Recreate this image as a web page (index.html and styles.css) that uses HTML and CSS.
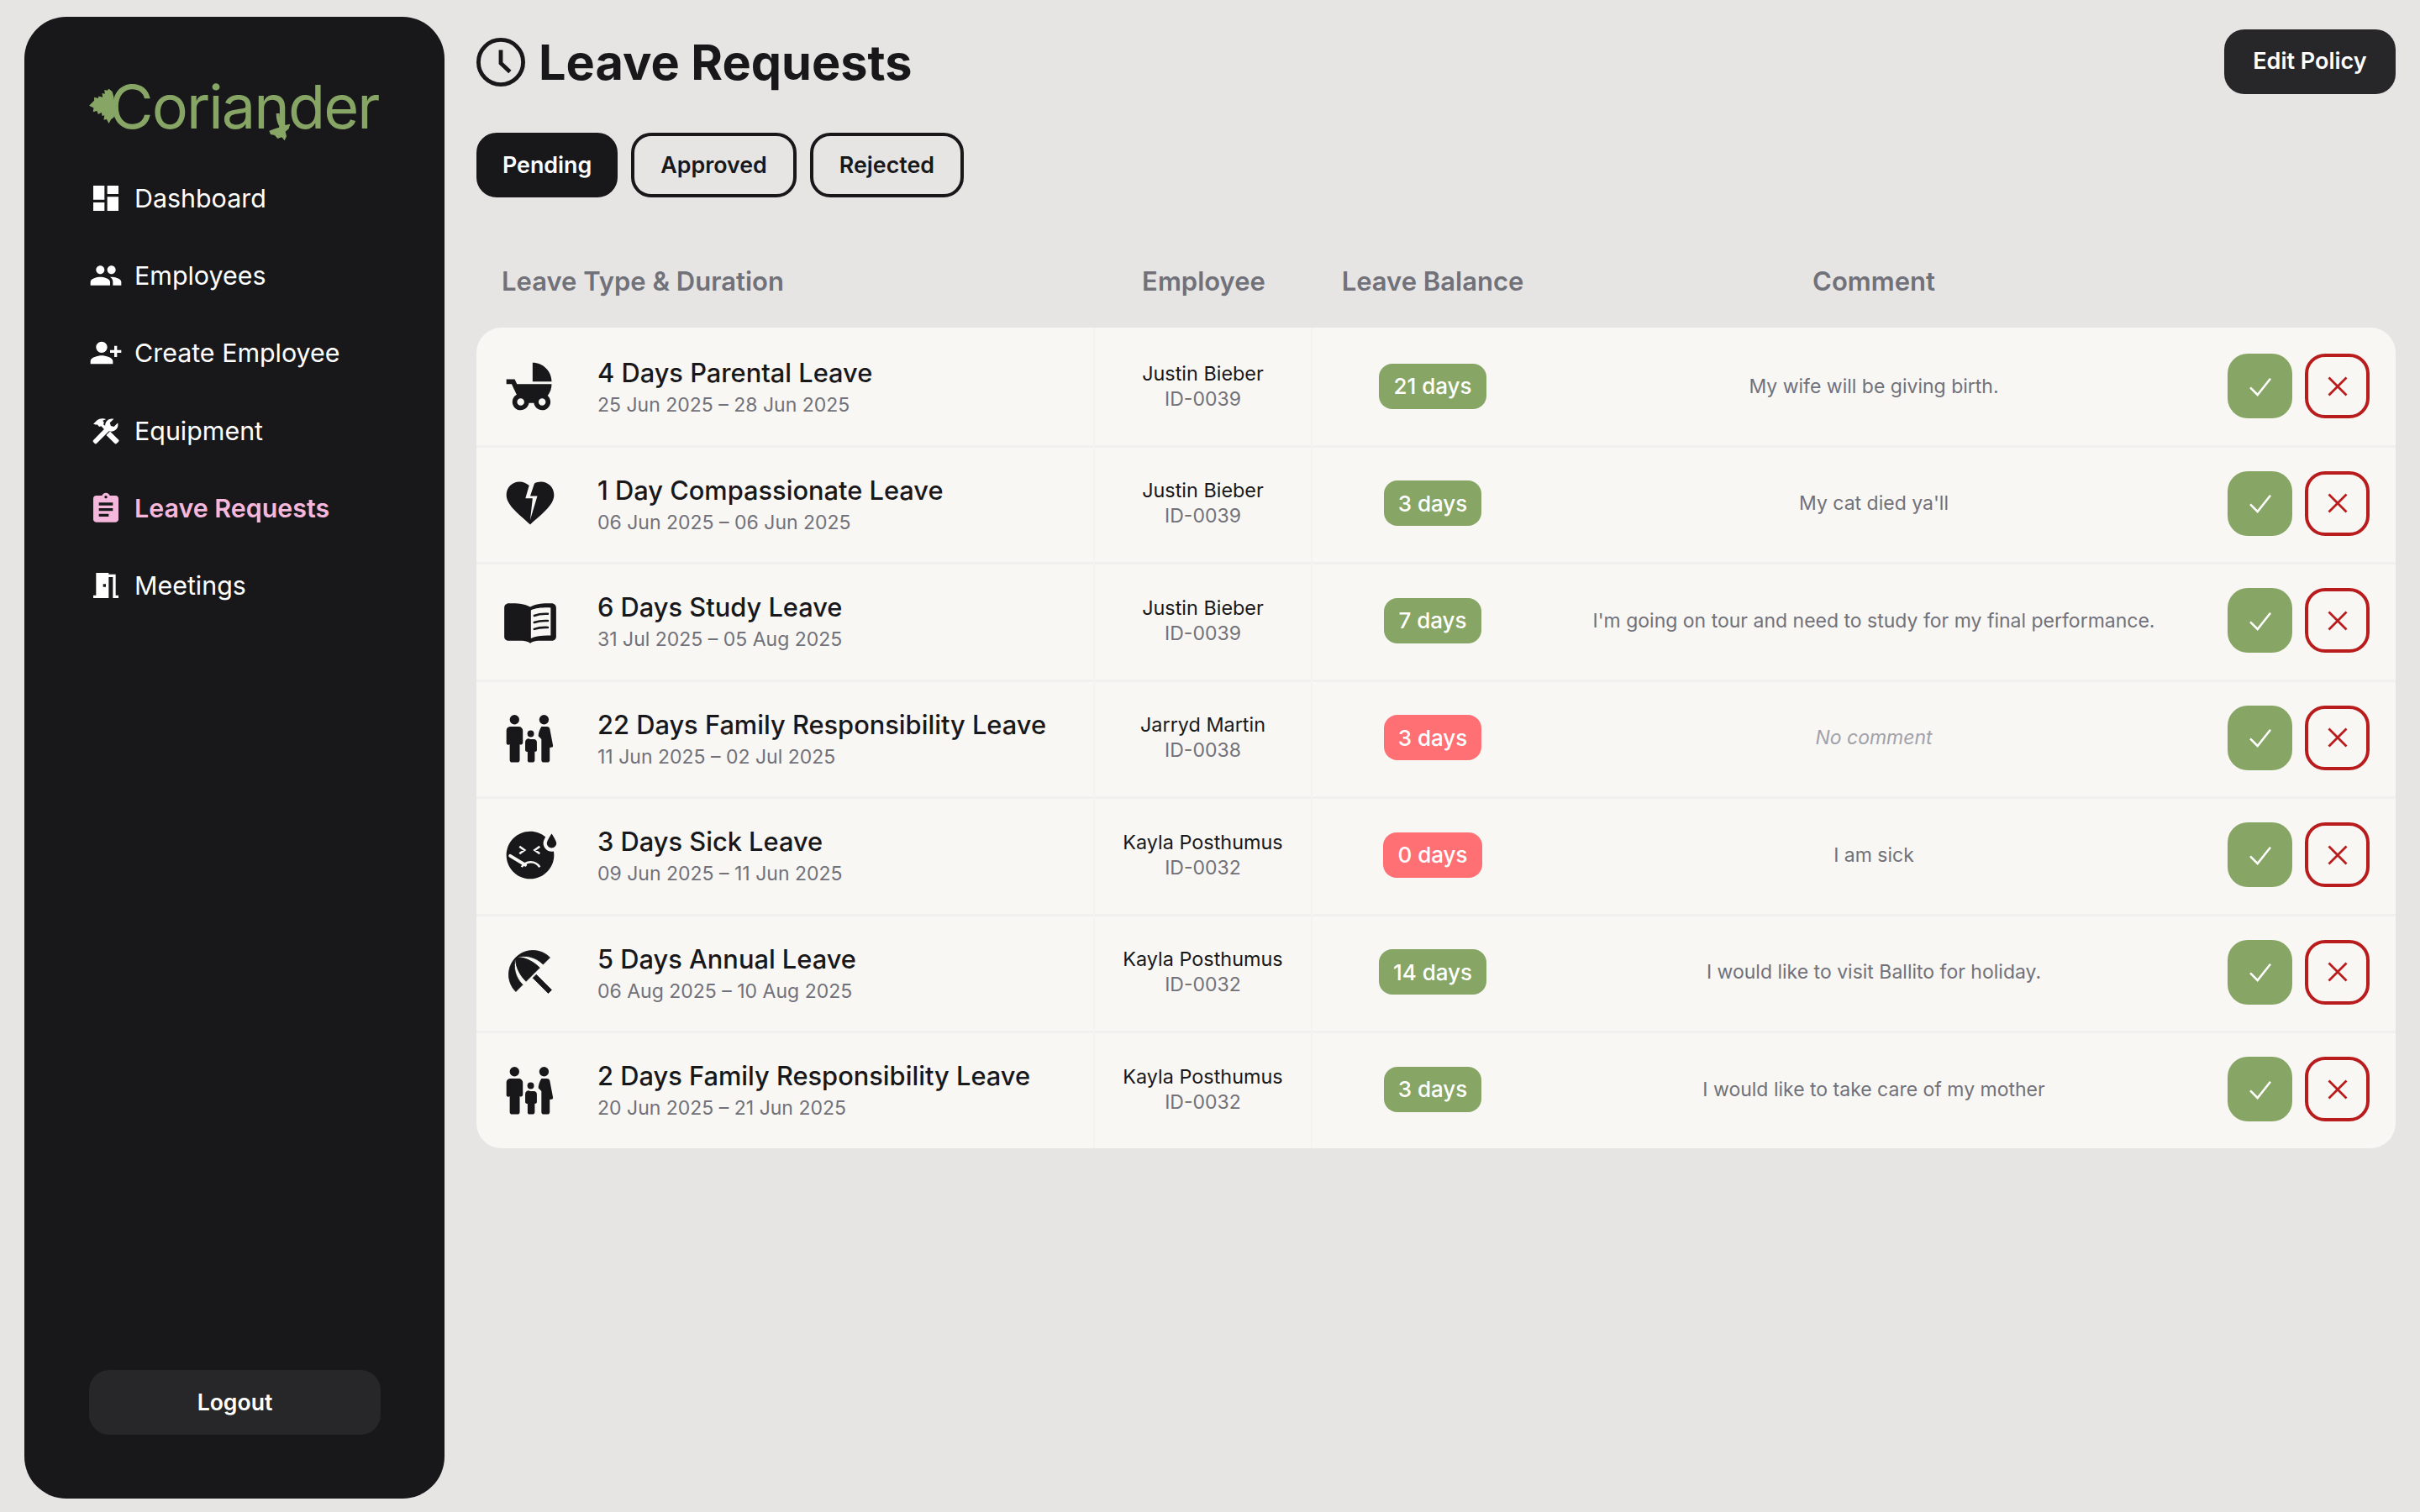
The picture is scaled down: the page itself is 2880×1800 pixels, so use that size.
FILE: index.html
```html
<!DOCTYPE html>
<html lang="en">
<head>
<meta charset="utf-8">
<title>Leave Requests</title>
<link rel="stylesheet" href="styles.css">
</head>
<body>
<svg class="defs" width="0" height="0" aria-hidden="true">
  <defs>
    <symbol id="i-family" viewBox="0 0 24 24">
      <circle cx="5.4" cy="4.5" r="2"/>
      <circle cx="17.8" cy="4.5" r="2"/>
      <circle cx="12.2" cy="10.4" r="1.4"/>
      <path d="M3.500 7.400h3.700a1.700 1.700 0 0 1 1.700 1.700v5.100a.8.8 0 0 1-1.300.6v6.600a1 1 0 0 1-1 1H4.400a1 1 0 0 1-1-1v-6.600a.8.8 0 0 1-1.400-.6V9.100a1.600 1.600 0 0 1 1.500-1.700z"/>
      <path d="M11 12.700h2.500a1.400 1.400 0 0 1 1.300 1.400v3.100a.7.7 0 0 1-.9.7v3.500a1 1 0 0 1-1 1h-1.100a.9.9 0 0 1-.9-1v-3.500a.7.7 0 0 1-1-.7v-3.100a1.400 1.400 0 0 1 2.100-1.400z"/>
      <path d="M16.700 7.400h2.300c.6 0 1 .3 1.200.8l1.300 6.800a1 1 0 0 1-.2 1.100l-1.100.1v5.200a1 1 0 0 1-1 1h-1.500a1 1 0 0 1-1-1v-8.700l-1.300-1.300c.1-1.400.5-2.800 1.300-4z"/>
    </symbol>
    <symbol id="i-check" viewBox="0 0 24 24"><path d="M3 13l6.500 6.500L21 5" fill="none" stroke="currentColor" stroke-width="1.9"/></symbol>
    <symbol id="i-cross" viewBox="0 0 24 24"><path d="M3 3l18 18M21 3L3 21" fill="none" stroke="currentColor" stroke-width="2.4"/></symbol>
  </defs>
</svg>
<div class="app">
  <aside class="sidebar">
    <div class="logo">
      <svg class="leaf-a" viewBox="18 60 92 128" aria-hidden="true"><path d="M105 90L100 72 88 62 82 68 72 66 74 80 64 78 66 92 52 88 50 96 36 92 36 104 18 122 34 130 32 144 46 140 50 152 62 146 64 158 72 156 70 172 80 170 88 185 96 170 104 165 110 155z"/></svg>
      <span class="logo-text">Coriander</span>
      <svg class="leaf-b" viewBox="650 150 90 105" aria-hidden="true"><path class="leaf-stem" d="M691 150C691 175 695 185 703 195"/><path d="M735 188L715 192 700 188 695 200 680 205 660 212 665 225 680 228 690 240 705 235 715 247 722 232 718 215 730 205z"/></svg>
    </div>
    <nav class="nav">
      <a class="nav-item"><svg class="nav-icon" viewBox="0 0 24 24"><path d="M3 13h8V3H3v10zm0 8h8v-6H3v6zm10 0h8V11h-8v10zm0-18v6h8V3h-8z"/></svg><span>Dashboard</span></a>
      <a class="nav-item"><svg class="nav-icon" viewBox="0 0 24 24"><path d="M16 11c1.66 0 2.99-1.34 2.99-3S17.66 5 16 5c-1.66 0-3 1.34-3 3s1.34 3 3 3zm-8 0c1.66 0 2.99-1.34 2.99-3S9.66 5 8 5C6.34 5 5 6.34 5 8s1.34 3 3 3zm0 2c-2.33 0-7 1.17-7 3.5V19h14v-2.5c0-2.33-4.67-3.5-7-3.5zm8 0c-.29 0-.62.02-.97.05 1.16.84 1.97 1.97 1.97 3.45V19h6v-2.5c0-2.33-4.67-3.5-7-3.5z"/></svg><span>Employees</span></a>
      <a class="nav-item"><svg class="nav-icon" viewBox="0 0 24 24"><path d="M9 12c2.21 0 4-1.79 4-4s-1.79-4-4-4-4 1.79-4 4 1.79 4 4 4zm9-2V7h2v3h3v2h-3v3h-2v-3h-3v-2h3zm-9 4c-2.67 0-8 1.34-8 4v2h16v-2c0-2.66-5.33-4-8-4z"/></svg><span>Create Employee</span></a>
      <a class="nav-item"><svg class="nav-icon" viewBox="-1 -1 26 26"><path d="M13.6 9.6l-2 2-3.3-3.300-1.400.4-1.700-1.700c-.5.2-1.200.4-1.600 0L2.300 6.700l2.900-3c1.300-1 3-1.500 4.700-1.300l2.300.5-2.600 1.200 1 1.600-.6 1.300z"/><path d="M21.800 20.300l-1.500 1.500c-.4.4-1 .4-1.400 0l-6.600-6.600 2.900-2.900 6.600 6.600c.4.4.4 1 0 1.400z"/><path d="M2.300 19.200c-.4.4-.4 1 0 1.400l1.100 1.200c.4.4 1 .4 1.400 0l9.600-9.600c1.900.6 4 .2 5.500-1.300 1.400-1.400 1.800-3.400 1.300-5.100l-3 3-2.400-.7-.7-2.400 3-3c-1.700-.5-3.700-.1-5.100 1.300-1.500 1.500-1.900 3.600-1.300 5.500z"/></svg><span>Equipment</span></a>
      <a class="nav-item is-active"><svg class="nav-icon" viewBox="0 0 24 24"><path fill-rule="evenodd" d="M19 3h-4.180C14.400 1.840 13.300 1 12 1c-1.300 0-2.400.84-2.820 2H5c-1.100 0-2 .9-2 2v15c0 1.100.9 2 2 2h14c1.100 0 2-.9 2-2V5c0-1.100-.9-2-2-2zm-7 0c.55 0 1 .45 1 1s-.45 1-1 1-1-.45-1-1 .45-1 1-1zM7 8v2h10V8H7zm0 4v2h10v-2H7zm0 4v2h7v-2H7z"/></svg><span>Leave Requests</span></a>
      <a class="nav-item"><svg class="nav-icon" viewBox="0 0 24 24"><path d="M14 6v15H3v-2h2V3h9v1h5v15h2v2h-4V6h-3zm-4 5v2h2v-2h-2z"/></svg><span>Meetings</span></a>
    </nav>
    <button class="logout">Logout</button>
  </aside>

  <main class="main">
    <header class="page-head">
      <h1 class="title">
        <svg class="title-icon" viewBox="0 0 24 24" aria-hidden="true"><circle cx="12" cy="12" r="11"/><path d="M12 6v6.500l4.500 4.300"/></svg>
        Leave Requests
      </h1>
      <button class="edit-policy">Edit Policy</button>
    </header>

    <div class="tabs">
      <button class="tab is-on">Pending</button>
      <button class="tab">Approved</button>
      <button class="tab">Rejected</button>
    </div>

    <div class="cols cols-head">
      <div class="head-first">Leave Type &amp; Duration</div>
      <div>Employee</div>
      <div>Leave Balance</div>
      <div>Comment</div>
      <div></div>
    </div>

    <section class="table">
      <article class="cols row">
        <div class="cell-type">
          <svg class="type-icon" viewBox="0 0 24 24"><path fill-rule="evenodd" d="M13 2v8h8c0-4.420-3.580-8-8-8zm6.320 13.890C20.370 14.540 21 12.840 21 11H6.440l-.95-2H2v2h2.220s1.890 4.070 2.120 4.420c-1.100.59-1.840 1.750-1.840 3.080C4.500 20.430 6.070 22 8 22c1.760 0 3.220-1.300 3.460-3h2.080c.24 1.700 1.700 3 3.460 3 1.930 0 3.500-1.570 3.500-3.500 0-1.040-.46-1.970-1.180-2.610zM8 20c-.83 0-1.500-.67-1.500-1.500S7.170 17 8 17s1.500.67 1.500 1.500S8.830 20 8 20zm9 0c-.83 0-1.500-.67-1.500-1.500S16.170 17 17 17s1.500.67 1.500 1.500S17.830 20 17 20z"/></svg>
          <div class="type-text"><div class="type-name">4 Days Parental Leave</div><div class="type-date">25 Jun 2025 – 28 Jun 2025</div></div>
        </div>
        <div class="cell-emp"><div class="emp-name">Justin Bieber</div><div class="emp-id">ID-0039</div></div>
        <div class="cell-bal"><span class="badge">21 days</span></div>
        <div class="cell-com">My wife will be giving birth.</div>
        <div class="cell-act"><button class="act act-ok"><svg viewBox="0 0 24 24"><use href="#i-check"/></svg></button><button class="act act-no"><svg viewBox="0 0 24 24"><use href="#i-cross"/></svg></button></div>
      </article>

      <article class="cols row">
        <div class="cell-type">
          <svg class="type-icon" viewBox="0 0 24 24"><path d="M16.500 3c-.96 0-1.900.25-2.730.69L12 9h3l-3 10 1-9h-3l1.540-5.390C10.470 3.610 9.010 3 7.500 3 4.420 3 2 5.420 2 8.500c0 4.130 4.160 7.180 10 12.500 5.470-4.940 10-8.260 10-12.500C22 5.420 19.580 3 16.500 3z"/></svg>
          <div class="type-text"><div class="type-name">1 Day Compassionate Leave</div><div class="type-date">06 Jun 2025 – 06 Jun 2025</div></div>
        </div>
        <div class="cell-emp"><div class="emp-name">Justin Bieber</div><div class="emp-id">ID-0039</div></div>
        <div class="cell-bal"><span class="badge">3 days</span></div>
        <div class="cell-com">My cat died ya'll</div>
        <div class="cell-act"><button class="act act-ok"><svg viewBox="0 0 24 24"><use href="#i-check"/></svg></button><button class="act act-no"><svg viewBox="0 0 24 24"><use href="#i-cross"/></svg></button></div>
      </article>

      <article class="cols row">
        <div class="cell-type">
          <svg class="type-icon" viewBox="0 0 24 24"><path fill-rule="evenodd" d="M3 4.700c3-.2 6.500 0 9 1.500 2.500-1.500 6-1.700 9-1.500 1.100 0 1.900.8 1.900 1.900v12.100c0 1-.8 1.700-1.900 1.700h-5.500c-1.200 0-2.400.3-3.500 1-1.100-.7-2.300-1-3.500-1H3c-1.100 0-1.900-.7-1.900-1.700V6.600c0-1.100.8-1.900 1.900-1.900zM12.300 7.600v11.800c2.200-1 5-1.300 8.300-1.200V6.500c-3.200-.1-6.300.1-8.300 1.100z"/><path class="book-lines" d="M13.700 9.900c1.700-.7 3.700-.9 5.700-.8M13.700 12.700c1.700-.6 3.700-.8 5.700-.7M13.700 15.500c1.700-.6 3.700-.8 5.700-.7"/></svg>
          <div class="type-text"><div class="type-name">6 Days Study Leave</div><div class="type-date">31 Jul 2025 – 05 Aug 2025</div></div>
        </div>
        <div class="cell-emp"><div class="emp-name">Justin Bieber</div><div class="emp-id">ID-0039</div></div>
        <div class="cell-bal"><span class="badge">7 days</span></div>
        <div class="cell-com">I'm going on tour and need to study for my final performance.</div>
        <div class="cell-act"><button class="act act-ok"><svg viewBox="0 0 24 24"><use href="#i-check"/></svg></button><button class="act act-no"><svg viewBox="0 0 24 24"><use href="#i-cross"/></svg></button></div>
      </article>

      <article class="cols row">
        <div class="cell-type">
          <svg class="type-icon" viewBox="0 0 24 24"><use href="#i-family"/></svg>
          <div class="type-text"><div class="type-name">22 Days Family Responsibility Leave</div><div class="type-date">11 Jun 2025 – 02 Jul 2025</div></div>
        </div>
        <div class="cell-emp"><div class="emp-name">Jarryd Martin</div><div class="emp-id">ID-0038</div></div>
        <div class="cell-bal"><span class="badge badge-low">3 days</span></div>
        <div class="cell-com is-empty">No comment</div>
        <div class="cell-act"><button class="act act-ok"><svg viewBox="0 0 24 24"><use href="#i-check"/></svg></button><button class="act act-no"><svg viewBox="0 0 24 24"><use href="#i-cross"/></svg></button></div>
      </article>

      <article class="cols row">
        <div class="cell-type">
          <svg class="type-icon" viewBox="0 0 24 24"><path d="M21 9c1.100 0 2-.9 2-2s-2-4-2-4-2 2.900-2 4 .9 2 2 2zM17.500 7c0-.73.41-1.710.92-2.660C16.680 2.880 14.440 2 11.990 2 6.470 2 2 6.480 2 12s4.470 10 9.990 10C17.520 22 22 17.520 22 12c0-.55-.06-1.090-.14-1.620-.28.07-.56.12-.86.12-1.930 0-3.500-1.570-3.500-3.500z"/><path class="sick-face" d="M7.500 8.400l2.100 1.500-2.100 1.500M16 8.400l-2.100 1.500 2.100 1.500M8.400 17c1.800-2.700 5.600-2.900 7.600 0"/><path class="sick-therm" d="M3.600 12.300l6.300 3.800"/></svg>
          <div class="type-text"><div class="type-name">3 Days Sick Leave</div><div class="type-date">09 Jun 2025 – 11 Jun 2025</div></div>
        </div>
        <div class="cell-emp"><div class="emp-name">Kayla Posthumus</div><div class="emp-id">ID-0032</div></div>
        <div class="cell-bal"><span class="badge badge-low">0 days</span></div>
        <div class="cell-com">I am sick</div>
        <div class="cell-act"><button class="act act-ok"><svg viewBox="0 0 24 24"><use href="#i-check"/></svg></button><button class="act act-no"><svg viewBox="0 0 24 24"><use href="#i-cross"/></svg></button></div>
      </article>

      <article class="cols row">
        <div class="cell-type">
          <svg class="type-icon" viewBox="0 0 24 24"><path class="soft" d="M13.127 14.560l1.430-1.430 6.440 6.443L19.570 21zM17.420 8.830l2.860-2.860c-3.950-3.950-10.350-3.960-14.300-.02 3.930-1.300 8.310-.25 11.440 2.880zM5.950 5.980c-3.940 3.950-3.930 10.350.02 14.300l2.860-2.860C5.700 14.290 4.650 9.910 5.950 5.980zM5.970 5.960l-.01.01c-.38 3.010 1.170 6.880 4.300 10.020l5.730-5.730c-3.130-3.130-7.010-4.680-10.020-4.300z"/></svg>
          <div class="type-text"><div class="type-name">5 Days Annual Leave</div><div class="type-date">06 Aug 2025 – 10 Aug 2025</div></div>
        </div>
        <div class="cell-emp"><div class="emp-name">Kayla Posthumus</div><div class="emp-id">ID-0032</div></div>
        <div class="cell-bal"><span class="badge">14 days</span></div>
        <div class="cell-com">I would like to visit Ballito for holiday.</div>
        <div class="cell-act"><button class="act act-ok"><svg viewBox="0 0 24 24"><use href="#i-check"/></svg></button><button class="act act-no"><svg viewBox="0 0 24 24"><use href="#i-cross"/></svg></button></div>
      </article>

      <article class="cols row">
        <div class="cell-type">
          <svg class="type-icon" viewBox="0 0 24 24"><use href="#i-family"/></svg>
          <div class="type-text"><div class="type-name">2 Days Family Responsibility Leave</div><div class="type-date">20 Jun 2025 – 21 Jun 2025</div></div>
        </div>
        <div class="cell-emp"><div class="emp-name">Kayla Posthumus</div><div class="emp-id">ID-0032</div></div>
        <div class="cell-bal"><span class="badge">3 days</span></div>
        <div class="cell-com">I would like to take care of my mother</div>
        <div class="cell-act"><button class="act act-ok"><svg viewBox="0 0 24 24"><use href="#i-check"/></svg></button><button class="act act-no"><svg viewBox="0 0 24 24"><use href="#i-cross"/></svg></button></div>
      </article>
    </section>
  </main>
</div>
</body>
</html>
```
FILE: styles.css
```css
* { box-sizing: border-box; }
html, body { margin: 0; height: 100%; }
body {
  background: #e6e5e3;
  color: #18181b;
  font-family: Inter, "Liberation Sans", sans-serif;
  overflow: hidden;
}
button { font-family: inherit; cursor: pointer; }
.defs { position: absolute; }

.app {
  display: flex;
  height: 1800px;
  padding: 20px 29px 16px 29px;
  gap: 38px;
}

/* Sidebar */
.sidebar {
  width: 500px;
  flex: none;
  background: #18181b;
  border-radius: 50px;
  display: flex;
  flex-direction: column;
  padding: 70px 76px 76px 77px;
}
.logo {
  position: relative;
  height: 70px;
  margin-bottom: 56px;
  color: #87a564;
  padding: 3px 0 0 24px;
  display: flex;
  align-items: center;
}
.logo-text {
  font-size: 72px;
  font-weight: 400;
  letter-spacing: -1.9px;
  line-height: 70px;
}
.leaf-a { position: absolute; left: 0; top: 15px; width: 31px; height: 43px; fill: #87a564; }
.leaf-b { position: absolute; left: 211px; top: 45px; width: 30px; height: 35px; fill: #87a564; }
.leaf-stem { fill: none; stroke: #87a564; stroke-width: 12; }
.nav { display: flex; flex-direction: column; gap: 52.2px; }
.nav-item {
  display: flex;
  align-items: center;
  height: 40px;
  gap: 14px;
  color: #fff;
  font-size: 30.4px;
  font-weight: 400;
  white-space: nowrap;
}
.nav-icon { width: 40px; height: 40px; flex: none; fill: currentColor; }
.nav-item.is-active { color: #f5b8dc; font-weight: 600; }
.logout {
  margin-top: auto;
  height: 77px;
  padding: 0 0 2px;
  border: 0;
  border-radius: 24px;
  background: #27272a;
  color: #fff;
  font-size: 26.6px;
  font-weight: 600;
}

/* Main */
.main { flex: 1; min-width: 0; padding-top: 15px; }
.page-head { display: flex; justify-content: space-between; align-items: center; height: 77px; }
.title {
  margin: 0;
  display: flex;
  align-items: center;
  gap: 16px;
  font-size: 57.6px;
  font-weight: 700;
  color: #18181b;
}
.title-icon { width: 58px; height: 58px; fill: none; stroke: #18181b; stroke-width: 2; }
.edit-policy {
  width: 204px;
  height: 77px;
  padding: 0 0 2px;
  border: 0;
  border-radius: 24px;
  background: #27272a;
  color: #fff;
  font-size: 27px;
  font-weight: 600;
}
.tabs { display: flex; gap: 16px; margin-top: 46px; }
.tab {
  height: 77px;
  padding: 0 31px 2px;
  border: 4px solid #18181b;
  border-radius: 24px;
  background: transparent;
  color: #18181b;
  font-size: 26.8px;
  font-weight: 600;
}
.tab.is-on { background: #18181b; color: #fff; padding: 0 27px 2px; }

/* Table */
.cols {
  display: grid;
  grid-template-columns: 736px 259px 286px 764px 239px;
}
.cols-head {
  margin-top: 64px;
  height: 70px;
  margin-bottom: 21px;
  align-items: center;
  text-align: center;
  color: #71717a;
  font-size: 31px;
  font-weight: 600;
}
.head-first { text-align: left; padding-left: 30px; }
.table {
  background: #f8f7f4;
  border-radius: 30px;
  overflow: hidden;
}
.row { height: 139.5px; }
.row + .row { box-shadow: inset 0 3px 0 #f1f0ee; }
.row > div { display: flex; align-items: center; justify-content: center; }
.row > div:nth-child(-n+2) { border-right: 2px solid #f4f3f0; }
.row > .cell-type { justify-content: flex-start; padding-left: 30px; gap: 46px; }
.type-icon { width: 68px; height: 68px; flex: none; fill: #18181b; }
.type-text { padding-top: 6px; }
.book-lines { fill: none; stroke: #18181b; stroke-width: .9; stroke-linecap: round; }
.sick-face { fill: none; stroke: #f8f7f4; stroke-width: .9; }
.sick-therm { fill: none; stroke: #f8f7f4; stroke-width: 1.4; stroke-linecap: round; }
.soft { stroke: #18181b; stroke-width: .3; stroke-linejoin: round; }
.type-name { font-size: 30.8px; font-weight: 500; line-height: 40px; color: #18181b; }
.type-date { font-size: 23px; line-height: 37px; color: #71717a; }
.row > .cell-emp { flex-direction: column; }
.emp-name { font-size: 23.4px; line-height: 30px; color: #18181b; }
.emp-id { font-size: 23px; line-height: 30px; color: #71717a; }
.badge {
  height: 54px;
  padding: 0 17px;
  display: inline-flex;
  align-items: center;
  border-radius: 16px;
  background: #87a564;
  color: #fff;
  font-size: 26px;
  font-weight: 500;
}
.badge-low { background: #ff7074; }
.cell-com { font-size: 23px; color: #71717a; }
.cell-com.is-empty { font-style: italic; color: #a1a1aa; }
.row > .cell-act { justify-content: flex-start; padding-left: 39px; gap: 15px; }
.act {
  width: 77px;
  height: 77px;
  padding: 0;
  border-radius: 24px;
  display: flex;
  align-items: center;
  justify-content: center;
}
.act-ok svg { width: 32px; height: 32px; }
.act-no svg { width: 28px; height: 28px; }
.act-ok { border: 0; background: #87a564; color: #fff; }
.act-no { border: 4px solid #b91c1c; background: transparent; color: #b91c1c; }
```
